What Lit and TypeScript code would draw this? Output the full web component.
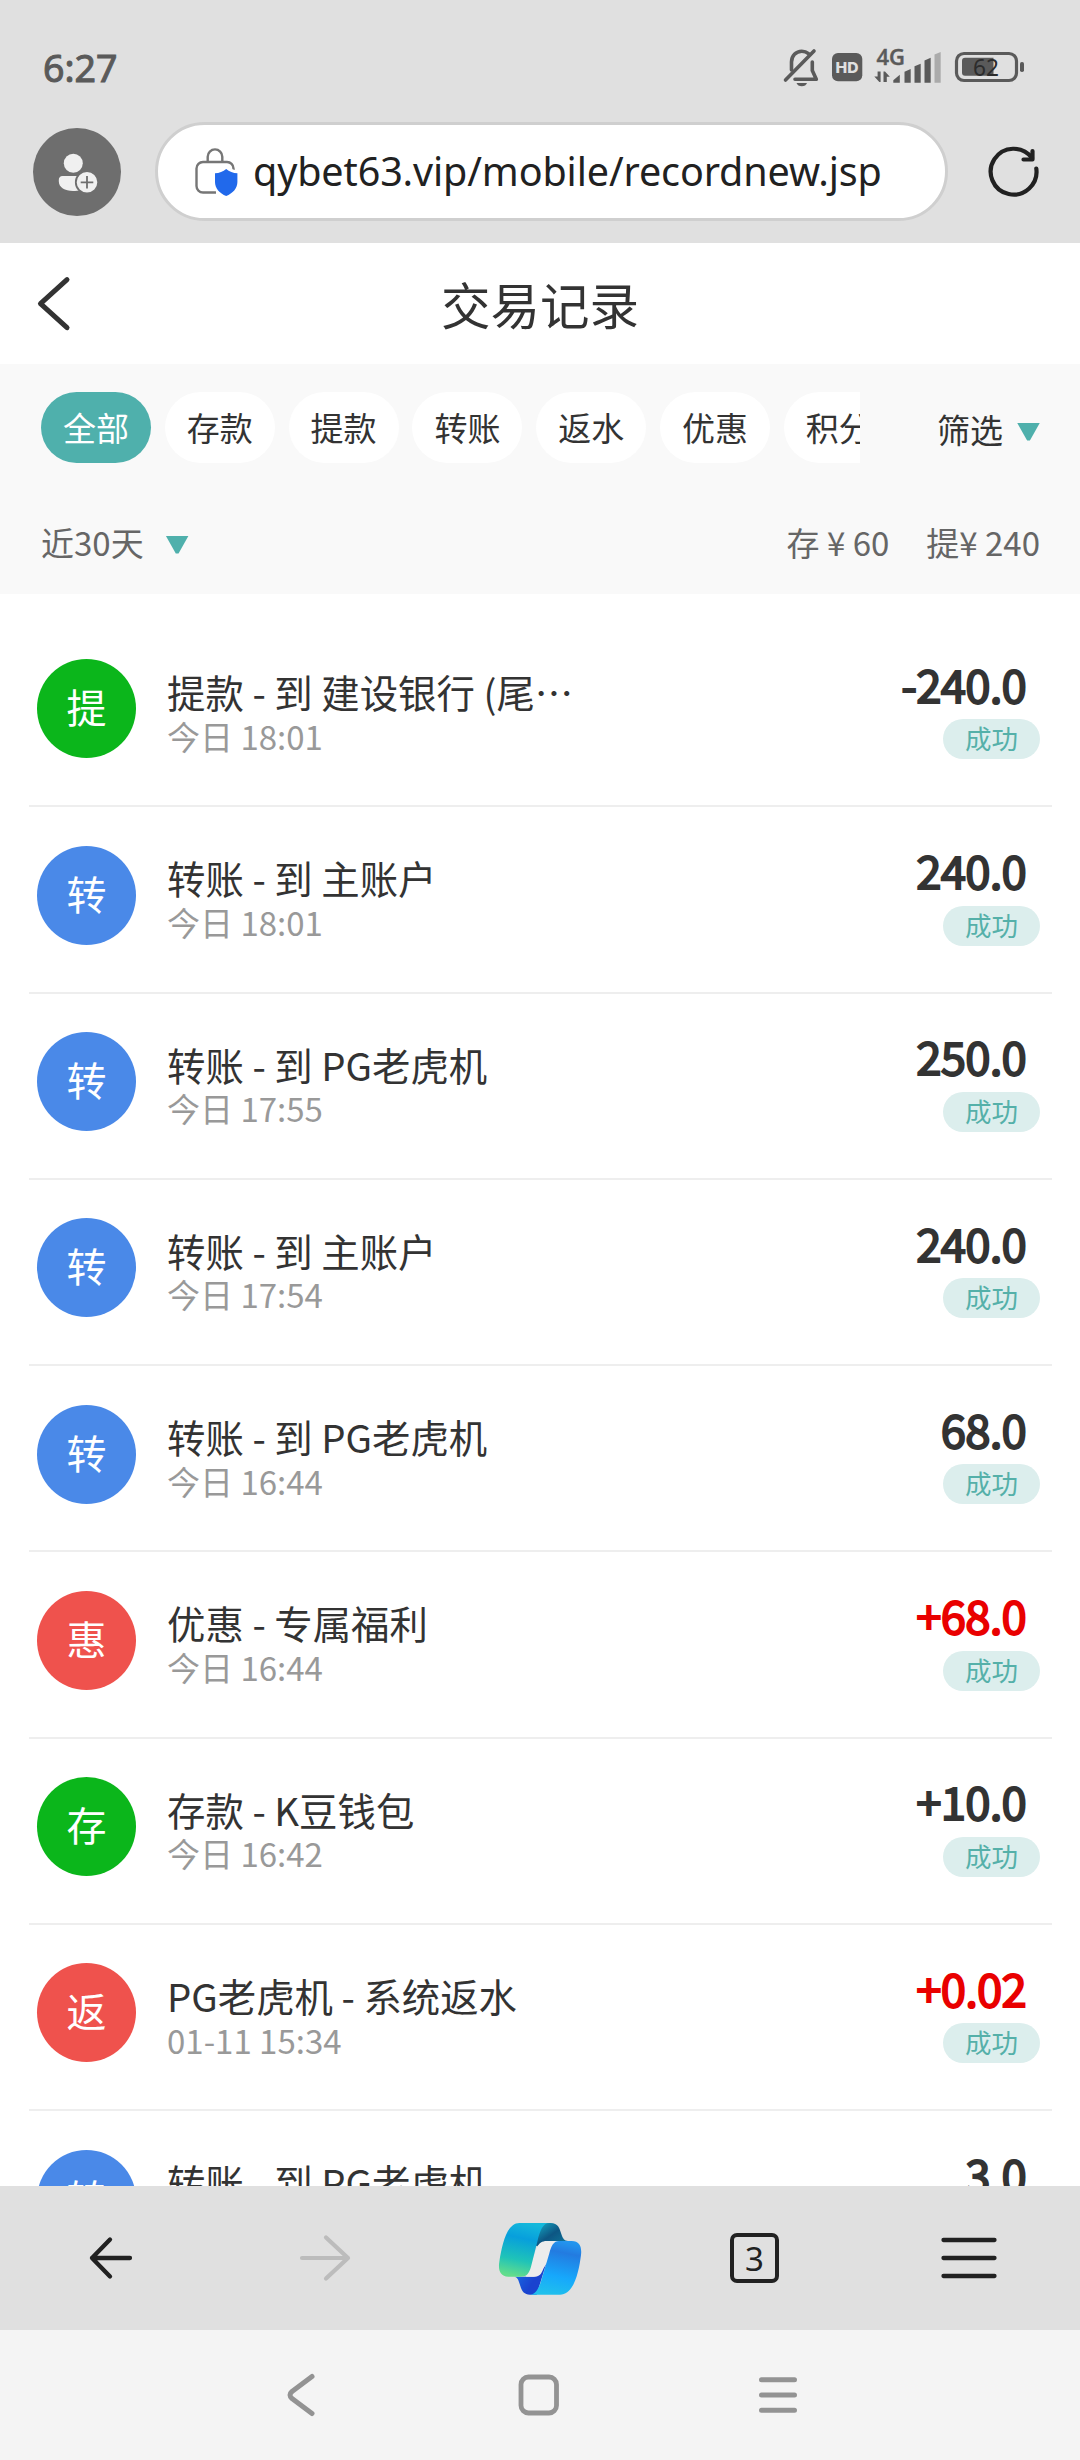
import { LitElement, html, css, svg } from "lit";
import { customElement, property } from "lit/decorators.js";
import { classMap } from "lit/directives/class-map.js";

type Tone = "green" | "blue" | "red";

interface RecordItem {
  mark: string;
  tone: Tone;
  title: string;
  time: string;
  amount: string;
  gain?: boolean;
}

const CHIPS = ["全部", "存款", "提款", "转账", "返水", "优惠", "积分"];

const RECORDS: RecordItem[] = [
  { mark: "提", tone: "green", title: "提款 - 到 建设银行 (尾…", time: "今日 18:01", amount: "-240.0" },
  { mark: "转", tone: "blue", title: "转账 - 到 主账户", time: "今日 18:01", amount: "240.0" },
  { mark: "转", tone: "blue", title: "转账 - 到 PG老虎机", time: "今日 17:55", amount: "250.0" },
  { mark: "转", tone: "blue", title: "转账 - 到 主账户", time: "今日 17:54", amount: "240.0" },
  { mark: "转", tone: "blue", title: "转账 - 到 PG老虎机", time: "今日 16:44", amount: "68.0" },
  { mark: "惠", tone: "red", title: "优惠 - 专属福利", time: "今日 16:44", amount: "+68.0", gain: true },
  { mark: "存", tone: "green", title: "存款 - K豆钱包", time: "今日 16:42", amount: "+10.0" },
  { mark: "返", tone: "red", title: "PG老虎机 - 系统返水", time: "01-11 15:34", amount: "+0.02", gain: true },
  { mark: "转", tone: "blue", title: "转账 - 到 PG老虎机", time: "01-11 15:30", amount: "3.0" },
];

@customElement("status-bar")
export class StatusBar extends LitElement {
  static styles = css`
    :host {
      display: flex;
      justify-content: space-between;
      align-items: center;
      height: 80px;
      padding: 29px 20px 0 43px;
      box-sizing: content-box;
      font-family: "Noto Sans", sans-serif;
      color: #5a5a5a;
    }
    .clock {
      font-size: 37.500px;
      font-weight: 400;
      -webkit-text-stroke: 1px #5a5a5a;
      line-height: 78px;
      padding-bottom: 2px;
    }
    .icons { display: block; }
    .hd { font: 800 15px "Inter", sans-serif; fill: #e0e0e0; }
    .net { font: 600 21px "Open Sans", "Noto Sans", sans-serif; fill: #5a5a5a; stroke: #5a5a5a; stroke-width: 0.4; }
    .level { font: 400 24px "Noto Sans", sans-serif; fill: #2c2c2c; }
  `;
  render() {
    return html`
      <div class="clock">6:27</div>
      <svg class="icons" width="300" height="80" viewBox="0 0 300 80">
        <g fill="none" stroke="#5a5a5a" stroke-width="3.6" stroke-linecap="round" stroke-linejoin="round">
          <path d="M31.5 41V33c0-6 4.500-10.800 10.300-10.800 2.600 0 4.900.9 6.700 2.400" />
          <path d="M52.300 33v8.500l4 8.800H35" />
          <path d="M25.500 51L54 22" />
        </g>
        <path d="M36.500 54h10.500c-.6 2-2.700 3.300-5.200 3.300s-4.700-1.300-5.300-3.300z" fill="#5a5a5a" />
        <rect x="72" y="24" width="30.300" height="28.300" rx="6" fill="#5a5a5a" />
        <text class="hd" x="87" y="43.700" text-anchor="middle" textLength="23" lengthAdjust="spacingAndGlyphs">HD</text>
        <text class="net" x="116.500" y="36" textLength="28.500" lengthAdjust="spacingAndGlyphs">4G</text>
        <g fill="#5a5a5a">
          <path d="M117.600 42.500h3V53h-1.300l-5-5.500h3.300z" />
          <path d="M123.500 53V42.500h1.500l4.800 5.200h-3V53z" />
          <path d="M133.300 53.700v-2.500l6.500-5.500v8z" />
          <path d="M144.500 53.700v-11l6.200-2.700v13.700z" />
          <path d="M154.500 53.700V37.300l6.200-2.500v18.900z" />
          <path d="M164.500 53.700V31.500l6.200-2.700v24.900z" />
        </g>
        <path d="M174.500 53.700V25.500l6.200-2.500v30.700z" fill="#ababab" />
        <rect x="196.500" y="24.500" width="60" height="27" rx="7.500" fill="none" stroke="#5a5a5a" stroke-width="3.200" />
        <path d="M205 28.700h28.500v18H205a3 3 0 0 1-3-3v-12a3 3 0 0 1 3-3z" fill="#5a5a5a" />
        <rect x="260" y="33" width="4" height="10" rx="1.800" fill="#5a5a5a" />
        <text class="level" x="213" y="47" textLength="26" lengthAdjust="spacingAndGlyphs">62</text>
      </svg>
    `;
  }
}

@customElement("address-bar")
export class AddressBar extends LitElement {
  static styles = css`
    :host {
      display: flex;
      align-items: center;
      height: 99px;
      margin-top: 13px;
      padding: 0 34px 22px 33px;
    }
    .avatar {
      width: 88px;
      height: 88px;
      border-radius: 50%;
      background: #6e6e6e;
      flex: none;
    }
    .pill {
      box-sizing: border-box;
      flex: none;
      display: flex;
      align-items: center;
      width: 793px;
      height: 99px;
      margin-left: 33.500px;
      padding-left: 33px;
      border: 3px solid #cfcfcf;
      border-radius: 50px;
      background: #fff;
    }
    .lock { flex: none; }
    .url {
      margin-left: 12.500px;
      padding-bottom: 1px;
      font: 400 39.500px/60px "Noto Sans", sans-serif;
      letter-spacing: -0.120px;
      color: #212121;
      white-space: nowrap;
    }
    .reload { margin-left: 35px; flex: none; }
    svg { display: block; }
  `;
  render() {
    return html`
      <div class="avatar">
        <svg width="88" height="88" viewBox="0 0 88 88">
          <g fill="#f0f0f0">
            <circle cx="40.300" cy="35.300" r="9.500" />
            <path d="M29.500 48H48v14.300c-2.500.6-5 .7-8 .7-8 0-14.200-3.500-14.200-9.700V52a4 4 0 0 1 3.700-4z" />
          </g>
          <circle cx="54" cy="54.300" r="11.200" fill="#f0f0f0" stroke="#6e6e6e" stroke-width="1.800" />
          <path d="M54 48v12.600M47.700 54.300h12.600" stroke="#6e6e6e" stroke-width="1.800" fill="none" />
        </svg>
      </div>
      <div class="pill">
        <svg class="lock" width="50" height="56" viewBox="191 144 50 56">
          <g fill="none" stroke="#767676" stroke-width="2.400">
            <path d="M207.700 161v-4.300a7.300 7.300 0 0 1 14.600 0V161" />
            <path d="M216 192.500h-13a6.500 6.500 0 0 1-6.500-6.500v-17.500a6.500 6.500 0 0 1 6.500-6.500h24a6.500 6.500 0 0 1 6.500 6.500v2" />
          </g>
          <path
            d="M226.200 167l12.800 4.500V184c0 7-5.500 11.500-12.800 14-7.300-2.500-12.800-7-12.800-14v-12.500z"
            fill="#fff"
          />
          <path
            d="M226.200 169c3 2.600 7 4.100 11.200 4.300V182c0 6.500-4.600 11.300-11.200 14-6.600-2.700-11.200-7.500-11.200-14v-8.700c4.200-.2 8.200-1.700 11.200-4.300z"
            fill="#2169eb"
          />
        </svg>
        <div class="url">qybet63.vip/mobile/recordnew.jsp</div>
      </div>
      <svg class="reload" width="62" height="60" viewBox="983 142 62 60">
        <g fill="none" stroke="#212121" stroke-width="4.200" stroke-linecap="round" stroke-linejoin="round">
          <path d="M1036.300 168.500A22.900 22.900 0 1 1 1032 158" />
          <path d="M1032.500 151v8.500h-9" />
        </g>
      </svg>
    `;
  }
}

@customElement("record-row")
export class RecordRow extends LitElement {
  @property({ attribute: false }) item!: RecordItem;
  static styles = css`
    :host {
      display: flex;
      align-items: flex-start;
      box-sizing: border-box;
      flex: none;
      height: 186.27px;
      margin: 0 28px 0 29px;
      padding: 0 12px 0 8px;
      border-bottom: 2px solid #eeeeee;
    }
    .mark {
      flex: none;
      width: 99px;
      height: 99px;
      margin-top: 38.400px;
      border-radius: 50%;
      color: #fff;
      font-size: 40px;
      line-height: 95px;
      text-align: center;
    }
    .green { background: #0bb61b; }
    .blue { background: #4a89e8; }
    .red { background: #ef524d; }
    .body {
      flex: 1;
      min-width: 0;
      margin: 48px 0 0 31px;
      line-height: 44px;
      white-space: nowrap;
    }
    .title { font-size: 38.400px; color: #333; }
    .time { font-size: 33px; color: #999; padding-top: 0.600px; }
    .side {
      display: flex;
      flex-direction: column;
      align-items: flex-end;
      margin-top: 31.700px;
    }
    .amount {
      margin-right: 14px;
      font-size: 45.500px;
      font-weight: 400;
      -webkit-text-stroke: 1.900px currentColor;
      line-height: 60px;
      letter-spacing: -0.800px;
      color: #333;
    }
    .amount.gain { color: #e90000; }
    .badge {
      box-sizing: border-box;
      width: 97px;
      height: 40px;
      margin-top: 6.500px;
      border-radius: 20px;
      background: #dceeed;
      color: #55b0a9;
      font-size: 26.500px;
      line-height: 38px;
      text-align: center;
    }
  `;
  render() {
    const r = this.item;
    return html`
      <div class=${classMap({ mark: true, [r.tone]: true })}>${r.mark}</div>
      <div class="body">
        <div class="title">${r.title}</div>
        <div class="time">${r.time}</div>
      </div>
      <div class="side">
        <div class=${classMap({ amount: true, gain: !!r.gain })}>${r.amount}</div>
        <div class="badge">成功</div>
      </div>
    `;
  }
}

const copilot = svg`
  <defs>
    <linearGradient id="teal" x1="0.6" y1="0" x2="0.4" y2="1">
      <stop offset="0" stop-color="#14b9dc" />
      <stop offset="0.3" stop-color="#079fdc" />
      <stop offset="0.7" stop-color="#1fc3b8" />
      <stop offset="1" stop-color="#62dd8c" />
    </linearGradient>
    <linearGradient id="sky" x1="0.6" y1="0" x2="0.4" y2="1">
      <stop offset="0" stop-color="#2395ee" />
      <stop offset="0.2" stop-color="#237be0" />
      <stop offset="0.65" stop-color="#16a8fc" />
      <stop offset="1" stop-color="#20c0ec" />
    </linearGradient>
    <linearGradient id="deep" x1="0" y1="0.2" x2="1" y2="0.8">
      <stop offset="0" stop-color="#1a6fe6" />
      <stop offset="0.6" stop-color="#1a43cf" />
    </linearGradient>
    <linearGradient id="shade" x1="0" y1="0" x2="1" y2="1">
      <stop offset="0" stop-color="#16b4cf" />
      <stop offset="0.5" stop-color="#0d5683" />
      <stop offset="1" stop-color="#0f7c9f" />
    </linearGradient>
  </defs>
  <path fill="url(#shade)" d="M160 54h52c22 0 27 16 32 33 5 15 9 20 20 21h-55c-15 0-24 6-29 20l-20-10z" />
  <path fill="url(#deep)" d="M103 215h57c15 0 23-9 28-24l12-20-30 98h-20c-19 0-25-12-31-32-5-17-9-21-16-22z" />
  <path fill="#ececec" d="M171 126c7-12 15-18 29-18h40l-50 83c-5 15-12 24-28 24h-24z" />
  <path fill="url(#teal)" d="M118 54h90c-19 0-28 22-36 56l-19 75c-6 21-14 30-31 30H85c-25 0-31-20-27-45 8-50 22-116 60-116z" />
  <path fill="url(#sky)" d="M237 108h38c24 0 31 18 28 42-6 47-20 119-63 119h-90c18 0 28-22 36-50l22-74c6-23 13-37 29-37z" />
`;

@customElement("browser-toolbar")
export class BrowserToolbar extends LitElement {
  static styles = css`
    :host {
      display: flex;
      align-items: center;
      flex: none;
      height: 144px;
      padding: 0 4px;
      background: #e0e0e0;
    }
    .slot { flex: 1; display: flex; justify-content: center; align-items: center; }
    .tabs {
      box-sizing: border-box;
      width: 49px;
      height: 50px;
      border: 4px solid #212121;
      border-radius: 7px;
      font: 400 33px/43px "Noto Sans", sans-serif;
      color: #212121;
      text-align: center;
    }
    svg { display: block; }
    .logo { padding-top: 3px; }
    .forward { margin-right: 2px; }
  `;
  render() {
    return html`
      <div class="slot">
        <svg width="50" height="50" viewBox="0 0 50 50">
          <path d="M24 6.500L6 25l18 18.500M6 25h38" fill="none" stroke="#212121" stroke-width="4.300" stroke-linecap="round" stroke-linejoin="round" />
        </svg>
      </div>
      <div class="slot">
        <svg class="forward" width="54" height="50" viewBox="0 0 54 50">
          <path d="M28 4.500L50 25 28 45.500M50 25H4" fill="none" stroke="#bcbcbc" stroke-width="4.200" stroke-linecap="round" stroke-linejoin="round" />
        </svg>
      </div>
      <div class="slot">
        <svg class="logo" width="120" height="110" viewBox="0 0 360 330">${copilot}</svg>
      </div>
      <div class="slot"><div class="tabs">3</div></div>
      <div class="slot">
        <svg width="58" height="50" viewBox="0 0 58 50">
          <path d="M3.500 7h51M3.500 25h51M3.500 43h51" fill="none" stroke="#212121" stroke-width="4.300" stroke-linecap="round" />
        </svg>
      </div>
    `;
  }
}

@customElement("system-nav")
export class SystemNav extends LitElement {
  static styles = css`
    :host {
      display: flex;
      justify-content: center;
      align-items: center;
      gap: 191px;
      flex: none;
      height: 130px;
      padding-right: 2px;
      background: #f4f4f4;
    }
    svg { display: block; }
  `;
  render() {
    return html`
      <svg width="48" height="48" viewBox="0 0 48 48">
        <path d="M36 5.500L16 20.500q-4 3.500 0 7L36 42.500" fill="none" stroke="#939393" stroke-width="5" stroke-linecap="round" stroke-linejoin="round" />
      </svg>
      <svg width="48" height="48" viewBox="0 0 48 48">
        <rect x="6" y="6" width="35.500" height="36" rx="7.500" fill="none" stroke="#939393" stroke-width="4.800" />
      </svg>
      <svg width="48" height="48" viewBox="0 0 48 48">
        <path d="M7.500 8.700h33M7.500 24h33M7.500 39.300h33" fill="none" stroke="#939393" stroke-width="5" stroke-linecap="round" />
      </svg>
    `;
  }
}

@customElement("app-root")
export class AppRoot extends LitElement {
  static styles = css`
    :host {
      display: flex;
      flex-direction: column;
      width: 1080px;
      height: 2460px;
      overflow: hidden;
      background: #fff;
      font-family: "Noto Sans CJK SC", sans-serif;
    }
    .chrome { flex: none; height: 243px; background: #e0e0e0; }
    .header {
      flex: none;
      display: grid;
      grid-template-columns: 104px 1fr 104px;
      align-items: center;
      height: 121px;
    }
    .back { display: block; margin-left: 34px; }
    .heading {
      font-size: 49.500px;
      line-height: 60px;
      color: #333;
      text-align: center;
      padding-top: 1px;
    }
    .filters {
      box-sizing: border-box;
      flex: none;
      height: 230px;
      padding: 28px 40px 0 41px;
      background: #f9f9f9;
    }
    .line { display: flex; align-items: center; justify-content: space-between; }
    .chips { display: flex; gap: 13.800px; width: 819px; overflow: hidden; }
    .chip {
      flex: none;
      width: 110px;
      height: 71px;
      border-radius: 35.500px;
      background: #fff;
      color: #333;
      font-size: 33px;
      line-height: 71px;
      text-align: center;
    }
    .chip.active { background: #4fb0ac; color: #fff; }
    .pick { display: flex; align-items: center; font-size: 33px; line-height: 48px; padding-top: 2px; color: #333; }
    .caret {
      width: 23px;
      height: 18px;
      background: #4fb0ac;
      clip-path: polygon(0 0, 100% 0, 56% 100%, 44% 100%);
      margin: 6px 0 0 14px;
    }
    .summary { margin-top: 55px; color: #666; font-size: 33px; line-height: 48px; }
    .range { display: flex; align-items: center; }
    .range .caret { margin: 5px 0 0 22px; }
    .totals { display: flex; gap: 37px; }
    .list {
      flex: 1;
      min-height: 0;
      display: flex;
      flex-direction: column;
      overflow: hidden;
      padding-top: 27.100px;
    }
  `;
  render() {
    return html`
      <div class="chrome">
        <status-bar></status-bar>
        <address-bar></address-bar>
      </div>
      <div class="header">
        <svg class="back" width="40" height="60" viewBox="34 273 40 60">
          <path d="M67 278.700L40.500 302.700 67 326.700" fill="none" stroke="#333" stroke-width="5" stroke-linecap="round" stroke-linejoin="round" />
        </svg>
        <div class="heading">交易记录</div>
      </div>
      <div class="filters">
        <div class="line">
          <div class="chips">
            ${CHIPS.map((c, i) => html`<div class=${classMap({ chip: true, active: i === 0 })}>${c}</div>`)}
          </div>
          <div class="pick">筛选<span class="caret"></span></div>
        </div>
        <div class="line summary">
          <div class="range">近30天<span class="caret"></span></div>
          <div class="totals"><span>存 ¥ 60</span><span>提¥ 240</span></div>
        </div>
      </div>
      <div class="list">${RECORDS.map((r) => html`<record-row .item=${r}></record-row>`)}</div>
      <browser-toolbar></browser-toolbar>
      <system-nav></system-nav>
    `;
  }
}
